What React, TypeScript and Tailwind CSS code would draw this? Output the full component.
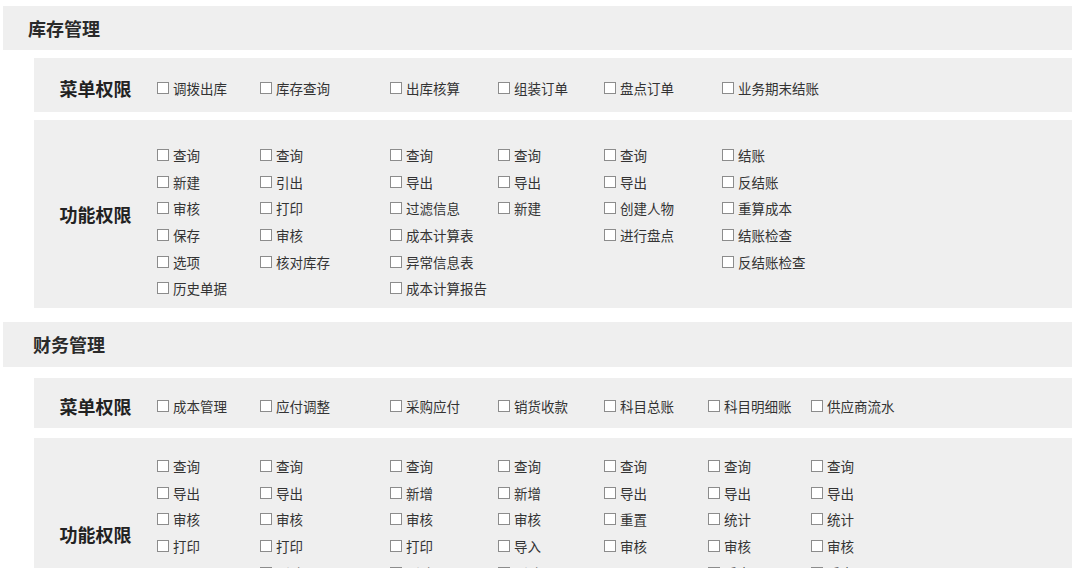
import React from "react";

type Section = {
  title: string;
  titlePad: string;
  widths: number[];
  menu: string[];
  funcs: string[][];
};

const sections: Section[] = [
  {
    title: "库存管理",
    titlePad: "pl-[25px]",
    widths: [103, 130, 108, 106, 118, 140],
    menu: ["调拨出库", "库存查询", "出库核算", "组装订单", "盘点订单", "业务期末结账"],
    funcs: [
      ["查询", "新建", "审核", "保存", "选项", "历史单据"],
      ["查询", "引出", "打印", "审核", "核对库存"],
      ["查询", "导出", "过滤信息", "成本计算表", "异常信息表", "成本计算报告"],
      ["查询", "导出", "新建"],
      ["查询", "导出", "创建人物", "进行盘点"],
      ["结账", "反结账", "重算成本", "结账检查", "反结账检查"],
    ],
  },
  {
    title: "财务管理",
    titlePad: "pl-[30px]",
    widths: [103, 130, 108, 106, 104, 103, 120],
    menu: ["成本管理", "应付调整", "采购应付", "销货收款", "科目总账", "科目明细账", "供应商流水"],
    funcs: [
      ["查询", "导出", "审核", "打印"],
      ["查询", "导出", "审核", "打印", "删除"],
      ["查询", "新增", "审核", "打印", "删除"],
      ["查询", "新增", "审核", "导入", "删除"],
      ["查询", "导出", "重置", "审核"],
      ["查询", "导出", "统计", "审核", "反审"],
      ["查询", "导出", "统计", "审核", "反审"],
    ],
  },
];

function Item({ text }: { text: string }) {
  return (
    <div className="flex items-center h-[26.6px] text-[13.5px] text-[#333] whitespace-nowrap">
      <span className="w-[12px] h-[12px] border border-[#8c8c8c] bg-white shrink-0 mr-[4px]" />
      {text}
    </div>
  );
}

function Label({ text }: { text: string }) {
  return (
    <div className="w-[123px] shrink-0 text-center text-[18px] font-bold text-[#222]">{text}</div>
  );
}

export default function App() {
  return (
    <div
      className="w-[1080px] h-[568px] overflow-hidden bg-white pt-[6px] pl-[3px] pr-[8px]"
      style={{ fontFamily: '"Noto Sans CJK SC", "Noto Sans", sans-serif' }}
    >
      {sections.map((s, si) => (
        <div key={s.title} className={si === 0 ? "" : "mt-[14px]"}>
          {/* section header */}
          <div
            className={`flex items-center bg-[#efefef] text-[18px] font-bold text-[#2a2a2a] ${s.titlePad} ${
              si === 0 ? "h-[44px]" : "h-[45px]"
            }`}
          >
            {s.title}
          </div>

          <div className="ml-[31px]">
            {/* menu permissions */}
            <div
              className={`flex items-center bg-[#efefef] pt-[6px] ${
                si === 0 ? "mt-[8px] h-[54px]" : "mt-[11px] h-[50px]"
              }`}
            >
              <Label text="菜单权限" />
              {s.menu.map((m, i) => (
                <div key={m} className="shrink-0" style={{ width: s.widths[i] }}>
                  <Item text={m} />
                </div>
              ))}
            </div>

            {/* function permissions */}
            <div
              className={`flex bg-[#efefef] ${
                si === 0 ? "mt-[8px] h-[188px]" : "mt-[10px] h-[192px]"
              }`}
            >
              <div className="flex items-center">
                <Label text="功能权限" />
              </div>
              <div className={`flex ${si === 0 ? "pt-[22px]" : "pt-[15px]"}`}>
                {s.funcs.map((col, i) => (
                  <div key={i} className="flex flex-col shrink-0" style={{ width: s.widths[i] }}>
                    {col.map((f, j) => (
                      <Item key={j} text={f} />
                    ))}
                  </div>
                ))}
              </div>
            </div>
          </div>
        </div>
      ))}
    </div>
  );
}
